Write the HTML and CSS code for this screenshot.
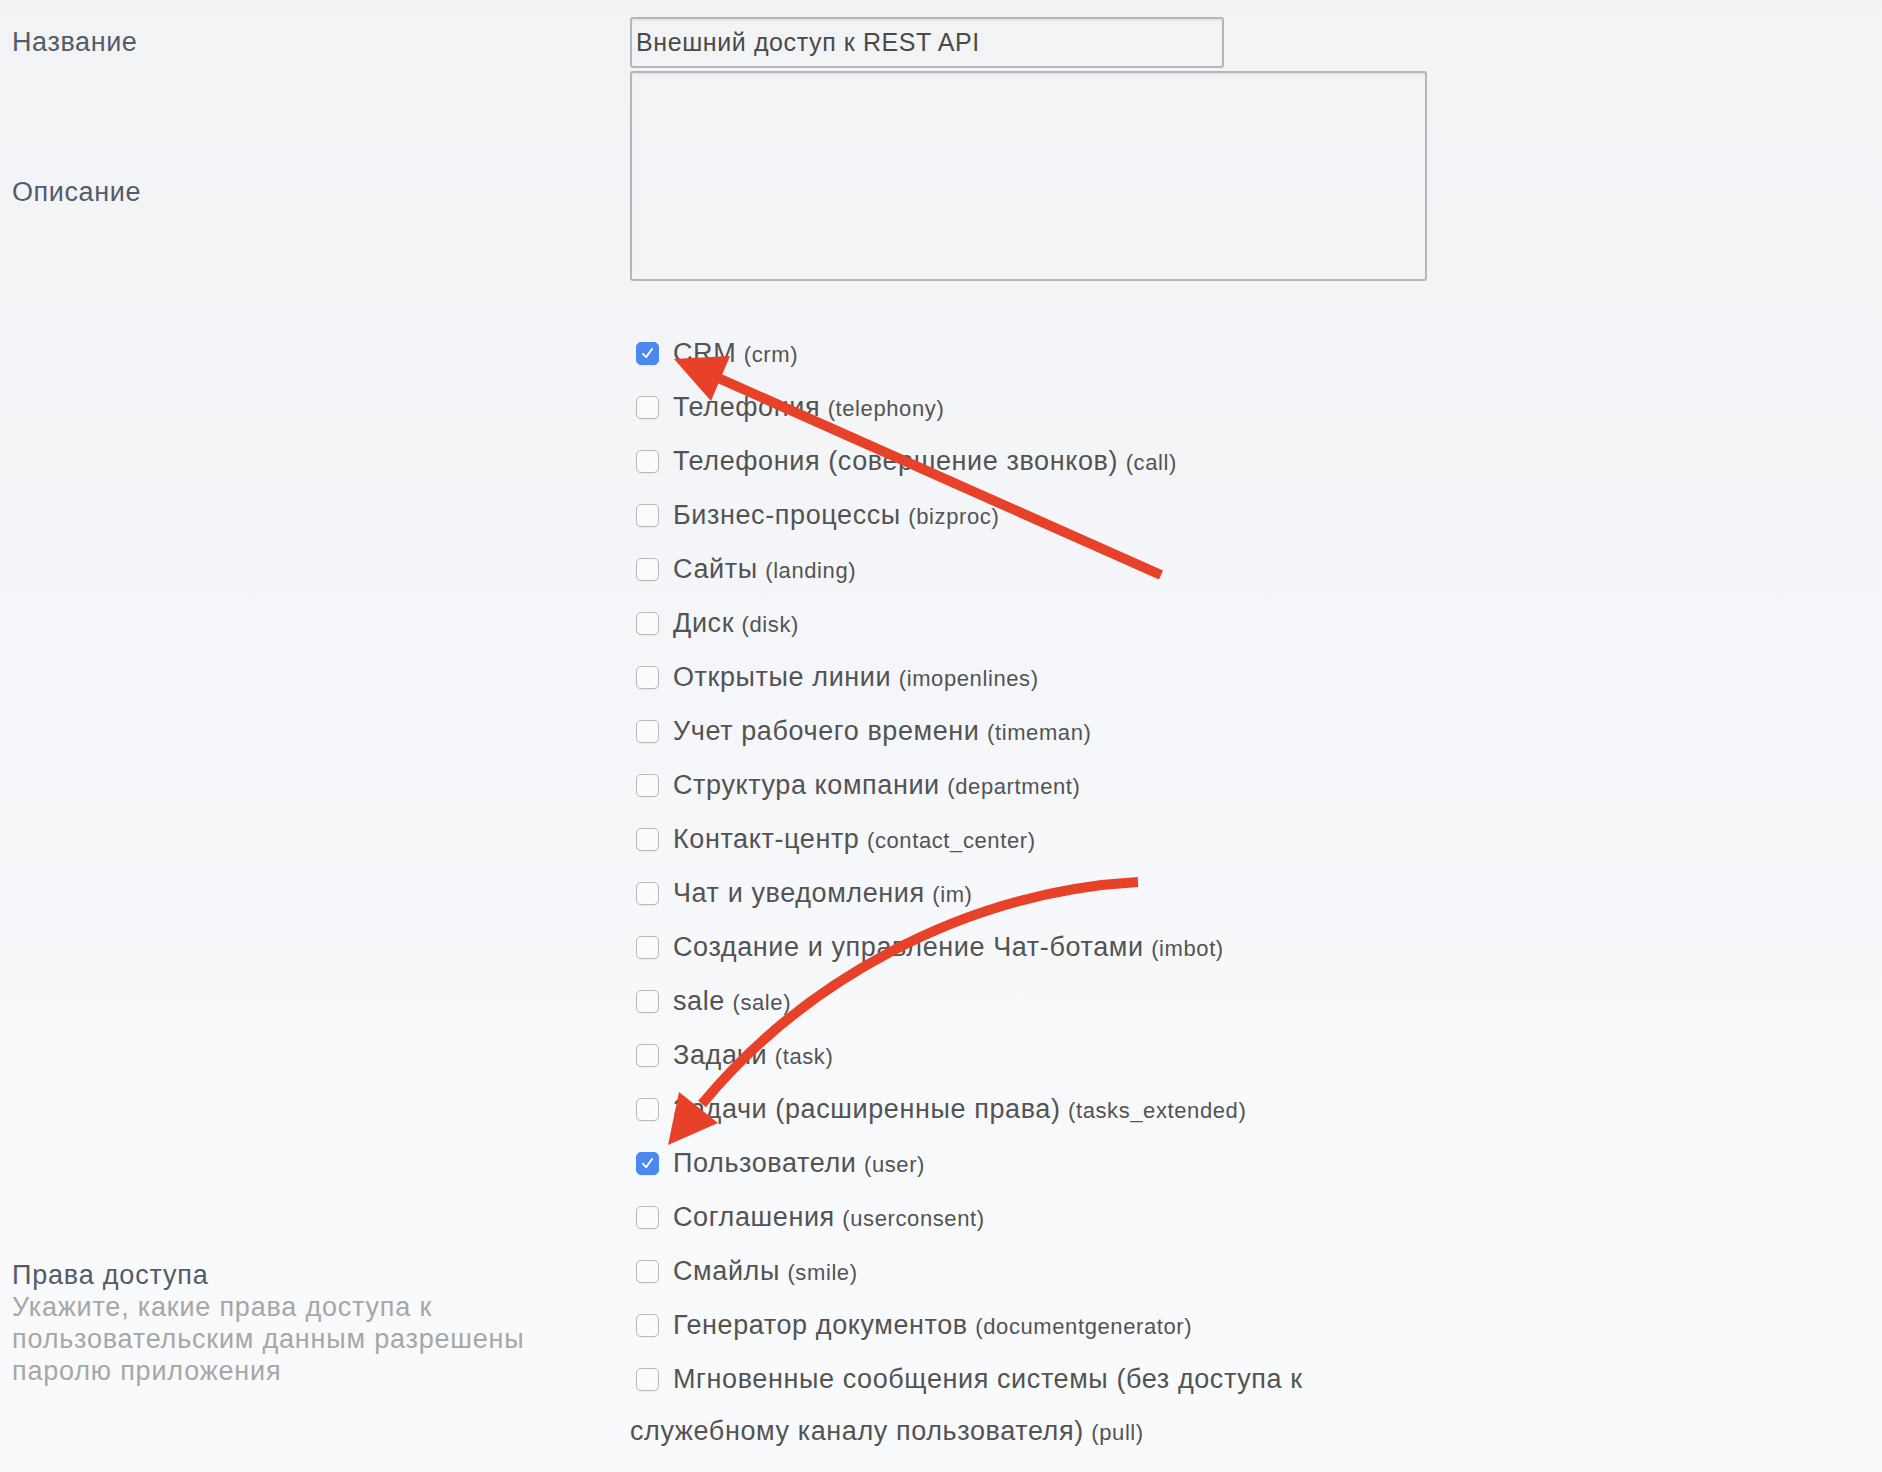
FILE: index.html
```html
<!DOCTYPE html>
<html lang="ru">
<head>
<meta charset="utf-8">
<title>Пароль приложения</title>
<link rel="stylesheet" href="styles.css">
</head>
<body>
<div class="page">
  <form class="form">
    <div class="row row-name">
      <div class="label">Название</div>
      <div class="field"><input class="input" type="text" value="Внешний доступ к REST API"></div>
    </div>
    <div class="row row-desc">
      <div class="label">Описание</div>
      <div class="field field-desc"><textarea class="textarea"></textarea></div>
    </div>
    <div class="row row-scope">
      <div class="label label-scope">
        <div class="scope-title">Права доступа</div>
        <div class="scope-hint">Укажите, какие права доступа к пользовательским данным разрешены паролю приложения</div>
      </div>
      <div class="field scopes">
        <label class="scope"><input class="cb" type="checkbox" checked><span class="scope-name">CRM</span> <span class="scope-code">(crm)</span></label>
        <label class="scope"><input class="cb" type="checkbox"><span class="scope-name">Телефония</span> <span class="scope-code">(telephony)</span></label>
        <label class="scope"><input class="cb" type="checkbox"><span class="scope-name">Телефония (совершение звонков)</span> <span class="scope-code">(call)</span></label>
        <label class="scope"><input class="cb" type="checkbox"><span class="scope-name">Бизнес-процессы</span> <span class="scope-code">(bizproc)</span></label>
        <label class="scope"><input class="cb" type="checkbox"><span class="scope-name">Сайты</span> <span class="scope-code">(landing)</span></label>
        <label class="scope"><input class="cb" type="checkbox"><span class="scope-name">Диск</span> <span class="scope-code">(disk)</span></label>
        <label class="scope"><input class="cb" type="checkbox"><span class="scope-name">Открытые линии</span> <span class="scope-code">(imopenlines)</span></label>
        <label class="scope"><input class="cb" type="checkbox"><span class="scope-name">Учет рабочего времени</span> <span class="scope-code">(timeman)</span></label>
        <label class="scope"><input class="cb" type="checkbox"><span class="scope-name">Структура компании</span> <span class="scope-code">(department)</span></label>
        <label class="scope"><input class="cb" type="checkbox"><span class="scope-name">Контакт-центр</span> <span class="scope-code">(contact_center)</span></label>
        <label class="scope"><input class="cb" type="checkbox"><span class="scope-name">Чат и уведомления</span> <span class="scope-code">(im)</span></label>
        <label class="scope"><input class="cb" type="checkbox"><span class="scope-name">Создание и управление Чат-ботами</span> <span class="scope-code">(imbot)</span></label>
        <label class="scope"><input class="cb" type="checkbox"><span class="scope-name">sale</span> <span class="scope-code">(sale)</span></label>
        <label class="scope"><input class="cb" type="checkbox"><span class="scope-name">Задачи</span> <span class="scope-code">(task)</span></label>
        <label class="scope"><input class="cb" type="checkbox"><span class="scope-name">Задачи (расширенные права)</span> <span class="scope-code">(tasks_extended)</span></label>
        <label class="scope"><input class="cb" type="checkbox" checked><span class="scope-name">Пользователи</span> <span class="scope-code">(user)</span></label>
        <label class="scope"><input class="cb" type="checkbox"><span class="scope-name">Соглашения</span> <span class="scope-code">(userconsent)</span></label>
        <label class="scope"><input class="cb" type="checkbox"><span class="scope-name">Смайлы</span> <span class="scope-code">(smile)</span></label>
        <label class="scope"><input class="cb" type="checkbox"><span class="scope-name">Генератор документов</span> <span class="scope-code">(documentgenerator)</span></label>
        <label class="scope"><input class="cb" type="checkbox"><span class="scope-name">Мгновенные сообщения системы (без доступа к служебному каналу пользователя)</span> <span class="scope-code">(pull)</span></label>
      </div>
    </div>
  </form>
  <svg class="annotations" width="1882" height="1472" viewBox="0 0 1882 1472" aria-hidden="true">
    <g fill="#e8412a" stroke="#e8412a">
      <line x1="1161" y1="575" x2="716" y2="377" stroke-width="10" stroke-linecap="butt"/>
      <polygon points="674,359 730,356 711,401" stroke="none"/>
      <path d="M1138 882 C960 892 800 985 702 1104" fill="none" stroke-width="10"/>
      <polygon points="668,1145 679,1092 718,1123" stroke="none"/>
    </g>
  </svg>
</div>
</body>
</html>
```
FILE: styles.css
```css
html, body {
  margin: 0;
  padding: 0;
}
body {
  width: 1882px;
  min-height: 1472px;
  background: linear-gradient(180deg, #f2f3f5 0%, #f4f6f9 45%, #f7f9fb 75%, #f9fafc 100%);
  font-family: "Liberation Sans", Arial, Helvetica, sans-serif;
  overflow: hidden;
}
.page {
  position: relative;
  min-height: 1472px;
}
.form {
  margin: 0;
  padding-top: 17px;
}
.row {
  display: grid;
  grid-template-columns: 630px 797px;
  align-items: center;
}
.label {
  padding-left: 12px;
  font-size: 27px;
  letter-spacing: 0.6px;
  color: #535c69;
}
.input {
  display: block;
  box-sizing: border-box;
  width: 594px;
  height: 51px;
  margin: 0;
  padding: 0 4px;
  border: 2px solid #b3b6bb;
  border-radius: 3px;
  background: transparent;
  box-shadow: inset 0 2px 2px rgba(0, 0, 0, 0.06);
  font-family: inherit;
  font-size: 25px;
  letter-spacing: 0.6px;
  color: #4a4a4a;
  outline: none;
}
.field-desc {
  padding-top: 3px;
  padding-bottom: 35px;
}
.textarea {
  display: block;
  box-sizing: border-box;
  width: 797px;
  height: 210px;
  margin: 0;
  border: 2px solid #b3b6bb;
  border-radius: 3px;
  background: transparent;
  box-shadow: inset 0 2px 2px rgba(0, 0, 0, 0.05);
  resize: none;
  outline: none;
}
.row-scope {
  align-items: end;
  padding-top: 11px;
}
.label-scope {
  padding-right: 78px;
  margin-bottom: 70px;
  letter-spacing: 0.8px;
}
.scope-title {
  font-size: 27px;
  line-height: 32px;
  color: #535c69;
}
.scope-hint {
  font-size: 27px;
  line-height: 32px;
  color: #a7a7a7;
}
.scopes {
  display: flex;
  flex-direction: column;
  gap: 2px;
}
.scope {
  display: block;
  font-size: 27px;
  line-height: 52px;
  color: #535353;
}
.scope-name {
  font-size: 27px;
  letter-spacing: 0.6px;
  line-height: 1;
}
.scope-code {
  font-size: 22px;
  letter-spacing: 0.6px;
  line-height: 1;
}
.cb {
  -webkit-appearance: none;
  appearance: none;
  box-sizing: border-box;
  display: inline-block;
  width: 23px;
  height: 23px;
  margin: 0 14px 0 6px;
  vertical-align: -3px;
  border: 1.5px solid #b9b9b9;
  border-radius: 5px;
  background: #fbfbfb;
  box-shadow: 0 1px 1px rgba(0, 0, 0, 0.05);
}
.cb:checked {
  border-color: #4a88f2;
  background-color: #4a88f2;
  background-image: url("data:image/svg+xml;utf8,<svg xmlns='http://www.w3.org/2000/svg' viewBox='0 0 23 23'><path d='M6.5 11.8 L10 15.5 L16.5 6.5' fill='none' stroke='white' stroke-width='2' stroke-linecap='round' stroke-linejoin='round'/></svg>");
  background-repeat: no-repeat;
  background-position: center;
}
.annotations {
  position: absolute;
  left: 0;
  top: 0;
  pointer-events: none;
}
```
